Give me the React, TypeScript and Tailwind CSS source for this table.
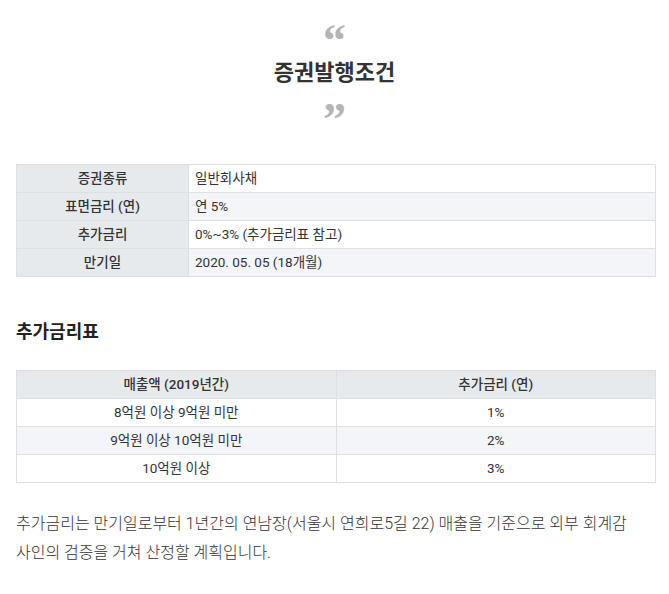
import React from 'react';

// 증권발행조건 summary
const terms = [
  { label: '증권종류', value: '일반회사채' },
  { label: '표면금리 (연)', value: '연 5%' },
  { label: '추가금리', value: '0%~3% (추가금리표 참고)' },
  { label: '만기일', value: '2020. 05. 05 (18개월)' },
];

const extraRates = [
  { sales: '8억원 이상 9억원 미만', rate: '1%' },
  { sales: '9억원 이상 10억원 미만', rate: '2%' },
  { sales: '10억원 이상', rate: '3%' },
];

const font = "font-['Roboto','Noto_Sans_CJK_KR',sans-serif]";

export default function App() {
  return (
    <div className={`${font} bg-white w-[669px] h-[594px] overflow-hidden text-[#333]`}>
      <div className="flex flex-col items-center pt-[26px]">
        <span className="font-['Liberation_Serif',serif] text-[46px] leading-[30px] h-[30px] font-bold text-[#b5b5b5]">“</span>
        <h2 className="mt-[2px] text-[22px] leading-[30px] font-bold text-[#333]">증권발행조건</h2>
        <span className="mt-[17px] font-['Liberation_Serif',serif] text-[46px] leading-[30px] h-[30px] font-bold text-[#b5b5b5]">”</span>
      </div>

      <table className="ml-4 mt-[29px] w-[640px] border-collapse text-[13.5px] text-[#333]">
        <tbody>
          {terms.map((t, i) => (
            <tr key={t.label} className={i % 2 === 1 ? 'bg-[#f4f5f9]' : 'bg-white'}>
              <td className="w-[172px] h-[28px] border border-[#dcdfe3] bg-[#e7eaed] text-center font-medium p-0">
                {t.label}
              </td>
              <td className="h-[28px] border border-[#dcdfe3] px-[6px] py-0">{t.value}</td>
            </tr>
          ))}
        </tbody>
      </table>

      <h3 className="ml-4 mt-[42px] text-[18px] leading-[26px] font-bold text-[#222]">추가금리표</h3>

      <table className="ml-4 mt-[25px] w-[640px] border-collapse text-[13.5px] text-[#333]">
        <thead>
          <tr className="bg-[#e7eaed]">
            <th className="w-1/2 h-[28px] border border-[#dcdfe3] font-medium p-0">매출액 (2019년간)</th>
            <th className="w-1/2 h-[28px] border border-[#dcdfe3] font-medium p-0">추가금리 (연)</th>
          </tr>
        </thead>
        <tbody>
          {extraRates.map((r, i) => (
            <tr key={r.rate} className={i % 2 === 1 ? 'bg-[#f4f5f9]' : 'bg-white'}>
              <td className="h-[28px] border border-[#dcdfe3] text-center p-0">{r.sales}</td>
              <td className="h-[28px] border border-[#dcdfe3] text-center p-0">{r.rate}</td>
            </tr>
          ))}
        </tbody>
      </table>

      <p className="ml-4 mr-[29px] mt-[26px] text-[16px] leading-[29px] font-light text-[#333]">
        추가금리는 만기일로부터 1년간의 연남장(서울시 연희로5길 22) 매출을 기준으로 외부 회계감사인의 검증을 거쳐 산정할 계획입니다.
      </p>
    </div>
  );
}
